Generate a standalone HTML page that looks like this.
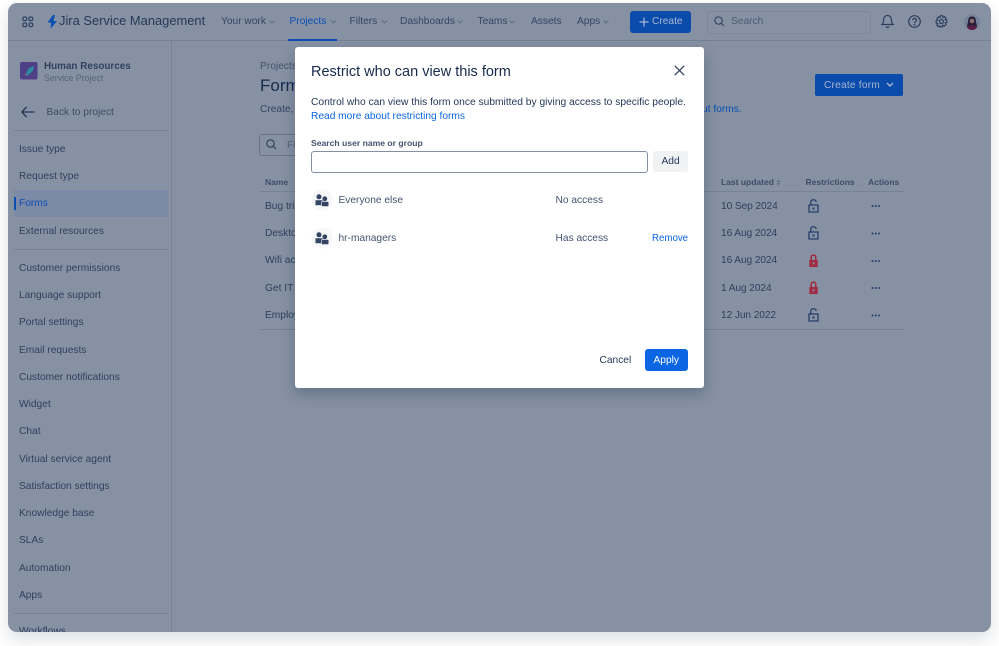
<!DOCTYPE html>
<html><head><meta charset="utf-8"><style>
html,body{margin:0;padding:0;width:999px;height:646px;overflow:hidden;background:#fff;font-family:"Liberation Sans",sans-serif}
#app{position:absolute;left:8px;top:3px;width:983px;height:629px;background:#8692a3;border-radius:9px;overflow:hidden;box-shadow:0 7px 16px rgba(9,30,66,.14)}
#root{position:absolute;left:0;top:0;width:999px;height:646px}
.t{position:absolute;white-space:nowrap;line-height:14px;color:#344563;font-size:10.2px;letter-spacing:0;margin-top:1px}
.s{color:#2f3f5e}
.h{font-size:8.5px;font-weight:bold;color:#3d4c68;letter-spacing:0}
.d{letter-spacing:-.1px}
.l{position:absolute;background:#76829a}
svg{position:absolute;overflow:visible}
#modal{position:absolute;left:295px;top:47px;width:409px;height:341px;background:#fff;border-radius:3px;box-shadow:0 6px 14px rgba(9,30,66,.28)}
</style></head><body><div id="root">
<div id="app"></div>
<div class="l" style="left:8px;top:40px;width:983px;height:1px"></div>
<div class="l" style="left:171px;top:41px;width:1px;height:591px"></div>
<svg style="left:22px;top:16px" width="12" height="12" fill="none" stroke="#344563" stroke-width="1.3"><rect x="1" y="1" width="3.6" height="3.6" rx="1.2"/><rect x="7" y="1" width="3.6" height="3.6" rx="1.2"/><rect x="1" y="7" width="3.6" height="3.6" rx="1.2"/><rect x="7" y="7" width="3.6" height="3.6" rx="1.2"/></svg>
<svg style="left:47px;top:15px" width="11" height="14"><path d="M6 0 L0.500 7.500 H4 L3.800 13.500 L10 6 H6.500 L8 0 Z" fill="#0b4fb3"/></svg>
<span class="t" style="left:59px;top:13px;font-size:12.900px;color:#253858">Jira Service Management</span>
<span class="t" style="left:221px;top:14px">Your work</span>
<span class="t" style="left:289.500px;top:14px;color:#0b4fb3">Projects</span>
<span class="t" style="left:349.500px;top:14px">Filters</span>
<span class="t" style="left:400px;top:14px">Dashboards</span>
<span class="t" style="left:477.500px;top:14px">Teams</span>
<span class="t" style="left:531px;top:14px">Assets</span>
<span class="t" style="left:577px;top:14px">Apps</span>
<svg style="left:0;top:0" width="999" height="41" fill="none" stroke="#5f6f8a" stroke-width="1"><path d="M269.500 20.500l2.500 2.500 2.500-2.500M331 20.500l2.500 2.500 2.500-2.500M382 20.500l2.500 2.500 2.500-2.500M457.500 20.500l2.500 2.500 2.500-2.500M509.500 20.500l2.500 2.500 2.500-2.500M603.500 20.500l2.500 2.500 2.500-2.500"/></svg>
<div style="position:absolute;left:288px;top:39px;width:49px;height:2px;background:#0b4fb3"></div>
<div style="position:absolute;left:630px;top:11px;width:61px;height:22px;background:#0b4bab;border-radius:3px"></div>
<svg style="left:639px;top:17px" width="10" height="10" stroke="#a9b7d1" stroke-width="1.2"><path d="M5 0.500V9.500M0.500 5H9.500"/></svg>
<span class="t" style="left:652px;top:14px;color:#a9b7d1">Create</span>
<div style="position:absolute;left:707px;top:11px;width:162px;height:21px;border:1px solid #7b879c;border-radius:3px"></div>
<svg style="left:714px;top:16px" width="11" height="11" fill="none" stroke="#344563" stroke-width="1.2"><circle cx="4.500" cy="4.500" r="3.700"/><path d="M7.300 7.300L10 10"/></svg>
<span class="t" style="left:731px;top:14px;color:#4c5b76">Search</span>
<svg style="left:881px;top:14px" width="13" height="15" fill="none" stroke="#2f3f5e" stroke-width="1.200"><path d="M1 10.500c1.200-1 1.500-2 1.500-4 0-3 1.600-5 4-5s4 2 4 5c0 2 .3 3 1.500 4zM5 12.500c.5 1.200 2.500 1.200 3 0"/></svg>
<svg style="left:908px;top:15px" width="13" height="13" fill="none" stroke="#2f3f5e" stroke-width="1.200"><circle cx="6.500" cy="6.500" r="5.800"/><path d="M4.700 5.200c0-2.300 3.700-2.300 3.700 0 0 1.400-1.900 1.400-1.900 2.900"/><circle cx="6.500" cy="9.800" r=".4"/></svg>
<svg style="left:935px;top:15px" width="13" height="13" fill="none" stroke="#2f3f5e" stroke-width="1.200"><circle cx="6.500" cy="6.500" r="2"/><path d="M5.400 .7h2.200l.4 1.700 1.500-.8 1.600 1.600-.9 1.500 1.600.5v2.200l-1.600.5.900 1.500-1.600 1.600-1.500-.8-.4 1.700H5.400L5 10.900l-1.500.8-1.600-1.600.9-1.500-1.600-.5V5.500l1.600-.5-.9-1.500 1.600-1.600 1.500.8z"/></svg>
<svg style="left:964px;top:14px" width="16" height="16"><circle cx="8" cy="8" r="8" fill="#76839a"/><path d="M4 8c0-4 1.500-5.500 4-5.500S12 4 12 8l1 4c-1 2.500-3 4-5 4s-4-1.500-5-4z" fill="#27203a"/><circle cx="8" cy="7" r="2.300" fill="#8a6f6f"/><path d="M3 13c1-2 8-2 10 0-1 2-3 3-5 3s-4-1-5-3z" fill="#5a1d45"/></svg>

<svg style="left:20px;top:62px" width="18" height="18"><rect width="17.500" height="17.500" rx="2" fill="#4f3f86"/><path d="M5 13L9 6l5-2-1 5-6 5z" fill="#2d8a9c"/><path d="M3 14l3-3 1 1z" fill="#a3497c"/></svg>
<span class="t" style="left:44px;top:59px;font-size:9.900px;font-weight:bold;color:#2f3f5e">Human Resources</span>
<span class="t" style="left:44px;top:70px;font-size:8.800px;color:#55637d">Service Project</span>
<svg style="left:21px;top:106px" width="14" height="12" fill="none" stroke="#253858" stroke-width="1.300"><path d="M13.500 6H.800M5.500 1L.8 6l4.700 5"/></svg>
<span class="t" style="left:46.500px;top:105px;color:#3d4c68">Back to project</span>
<div class="l" style="left:14px;top:130px;width:154px;height:1px"></div>
<span class="t s" style="left:19px;top:142px">Issue type</span>
<span class="t s" style="left:19px;top:169px">Request type</span>
<div style="position:absolute;left:14px;top:190px;width:154px;height:27px;background:#7d8aa7"></div>
<div style="position:absolute;left:14px;top:197px;width:2px;height:13px;background:#0b4fb3"></div>
<span class="t" style="left:19px;top:196px;color:#0b4fb3">Forms</span>
<span class="t s" style="left:19px;top:224px">External resources</span>
<div class="l" style="left:14px;top:249px;width:154px;height:1px"></div>
<span class="t s" style="left:19px;top:261px">Customer permissions</span>
<span class="t s" style="left:19px;top:288px">Language support</span>
<span class="t s" style="left:19px;top:315px">Portal settings</span>
<span class="t s" style="left:19px;top:343px">Email requests</span>
<span class="t s" style="left:19px;top:370px">Customer notifications</span>
<span class="t s" style="left:19px;top:397px">Widget</span>
<span class="t s" style="left:19px;top:424px">Chat</span>
<span class="t s" style="left:19px;top:452px">Virtual service agent</span>
<span class="t s" style="left:19px;top:479px">Satisfaction settings</span>
<span class="t s" style="left:19px;top:506px">Knowledge base</span>
<span class="t s" style="left:19px;top:533px">SLAs</span>
<span class="t s" style="left:19px;top:561px">Automation</span>
<span class="t s" style="left:19px;top:588px">Apps</span>
<div class="l" style="left:14px;top:613px;width:154px;height:1px"></div>
<div style="position:absolute;left:19px;top:620px;height:12px;width:60px;overflow:hidden"><span class="t s" style="left:0;top:4px">Workflows</span></div>

<span class="t" style="left:260px;top:59px;color:#44536f">Projects</span>
<span class="t" style="left:260px;top:75px;font-size:17px;line-height:20px;color:#172b4d">Forms</span>
<span class="t" style="left:260px;top:102px">Create,</span>
<span class="t" style="left:702px;top:102px;color:#0b4fb3">ut forms.</span>
<div style="position:absolute;left:815px;top:74px;width:88px;height:22px;background:#0b4bab;border-radius:2px"></div>
<span class="t" style="left:824px;top:78px;color:#a9b7d1;letter-spacing:.2px">Create form</span>
<svg style="left:886px;top:82px" width="8" height="6" fill="none" stroke="#a9b7d1" stroke-width="1.400"><path d="M1 1l3 3 3-3"/></svg>
<div style="position:absolute;left:259px;top:134px;width:60px;height:20px;border:1px solid #67748c;border-radius:3px"></div>
<svg style="left:266px;top:139px" width="11" height="11" fill="none" stroke="#2f3f5e" stroke-width="1.200"><circle cx="4.500" cy="4.500" r="3.700"/><path d="M7.300 7.300L10 10"/></svg>
<span class="t" style="left:287px;top:138px;color:#55637d">Filter</span>
<span class="t h" style="left:265px;top:174px">Name</span>
<span class="t h" style="left:721px;top:174px">Last updated</span>
<svg style="left:776px;top:179px" width="5" height="7" fill="#5f6f8a"><path d="M.5 3L2.500.8 4.500 3zM.5 4L2.500 6.200 4.500 4z"/></svg>
<span class="t h" style="left:805.500px;top:174px">Restrictions</span>
<span class="t h" style="left:868px;top:174px">Actions</span>
<div class="l" style="left:260px;top:191px;width:644px;height:1px"></div>
<div class="l" style="left:260px;top:329px;width:644px;height:1px;background:#717e96"></div>
<span class="t s" style="left:265px;top:199px">Bug triage</span>
<span class="t s" style="left:265px;top:226px">Desktop</span>
<span class="t s" style="left:265px;top:253px">Wifi access</span>
<span class="t s" style="left:265px;top:281px">Get IT</span>
<span class="t s" style="left:265px;top:308px">Employee</span>
<span class="t s d" style="left:721px;top:199px">10 Sep 2024</span>
<span class="t s d" style="left:721px;top:226px">16 Aug 2024</span>
<span class="t s d" style="left:721px;top:253px">16 Aug 2024</span>
<span class="t s d" style="left:721px;top:281px">1 Aug 2024</span>
<span class="t s d" style="left:721px;top:308px">12 Jun 2022</span>
<svg style="left:0;top:0" width="999" height="646">
<defs><g id="o"><path d="M1 6H10V13H1Z" fill="none" stroke="#253e6b" stroke-width="1.300"/><path d="M2.800 6V3C2.800 0 7.800 0 8.200 3" fill="none" stroke="#253e6b" stroke-width="1.300"/><rect x="4.500" y="8.500" width="2" height="2" fill="#253e6b"/></g>
<g id="c"><path d="M1.300 6H9.700V13H1.300Z" fill="#a12b42"/><path d="M3.200 6.500V3.200C3.200 .4 7.800 .4 7.800 3.200V6.500" fill="none" stroke="#a12b42" stroke-width="1.500"/><rect x="4.600" y="8.300" width="1.800" height="2" fill="#8692a3"/></g>
<g id="d" fill="#253e6b"><circle cx="0" cy="0" r="1"/><circle cx="3.300" cy="0" r="1"/><circle cx="6.600" cy="0" r="1"/></g></defs>
<use href="#o" x="808" y="199"/><use href="#o" x="808" y="226"/><use href="#c" x="808" y="254"/><use href="#c" x="808" y="281"/><use href="#o" x="808" y="308"/>
<use href="#d" x="872.500" y="206"/><use href="#d" x="872.500" y="233.500"/><use href="#d" x="872.500" y="261"/><use href="#d" x="872.500" y="288"/><use href="#d" x="872.500" y="315.500"/>
</svg>

<div id="modal"></div>
<span class="t" style="left:311px;top:62.500px;font-size:14.500px;line-height:16px;color:#172b4d">Restrict who can view this form</span>
<svg style="left:674px;top:65px" width="11" height="11" fill="none" stroke="#344563" stroke-width="1.300"><path d="M.8.800L10.200 10.200M10.200.800L.8 10.200"/></svg>
<span class="t" style="left:311px;top:95px;color:#253858;font-size:10.250px">Control who can view this form once submitted by giving access to specific people.</span>
<span class="t" style="left:311px;top:109px;color:#0b66e4;font-size:10.200px">Read more about restricting forms</span>
<span class="t" style="left:311px;top:135px;font-size:8.600px;font-weight:bold;color:#44546f">Search user name or group</span>
<div style="position:absolute;left:311px;top:151px;width:335px;height:20px;border:1px solid #8590a2;border-radius:3px;background:#fff"></div>
<div style="position:absolute;left:653px;top:151px;width:35px;height:21px;background:#f1f2f4;border-radius:3px"></div>
<span class="t" style="left:661.500px;top:154px;color:#253858">Add</span>
<svg style="left:311px;top:189px" width="22" height="60">
<g id="p"><circle cx="11" cy="11" r="10.500" fill="#f6f7f9"/><circle cx="8" cy="7.800" r="2.500" fill="#344563"/><path d="M4.500 11.200h7v5H4.500z" fill="#344563"/><circle cx="13.800" cy="9.800" r="2.400" fill="#344563"/><rect x="10.300" y="12.500" width="7.500" height="5" rx="1" fill="#344563" stroke="#f6f7f9" stroke-width=".6"/></g>
<use href="#p" y="38"/></svg>
<span class="t" style="left:338.500px;top:193px;color:#44546f">Everyone else</span>
<span class="t" style="left:338.500px;top:231px;color:#44546f">hr-managers</span>
<span class="t" style="left:555.500px;top:193px;color:#44546f">No access</span>
<span class="t" style="left:555.500px;top:231px;color:#44546f">Has access</span>
<span class="t" style="left:652px;top:231px;color:#0b66e4;font-size:9.700px">Remove</span>
<span class="t" style="left:599.500px;top:353px;color:#253858">Cancel</span>
<div style="position:absolute;left:645px;top:349px;width:43px;height:22px;background:#0c66e4;border-radius:3px"></div>
<span class="t" style="left:653.500px;top:353px;color:#fff">Apply</span>
</div></body></html>
